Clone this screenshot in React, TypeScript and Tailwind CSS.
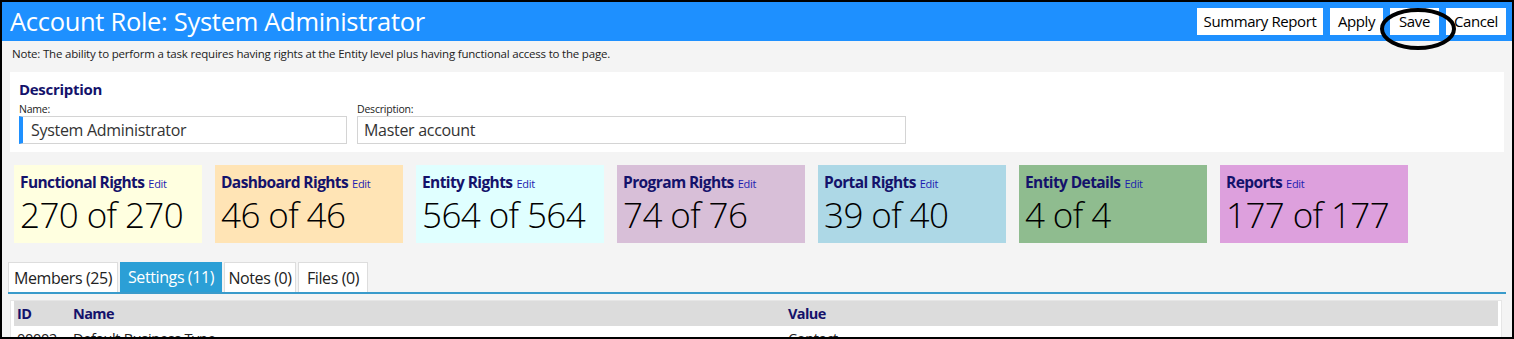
const font = { fontFamily: '"Open Sans", "Noto Sans", sans-serif' };

const cards = [
  { title: 'Functional Rights', value: '270 of 270', bg: 'bg-[#ffffe0]' },
  { title: 'Dashboard Rights', value: '46 of 46', bg: 'bg-[#ffe4b5]' },
  { title: 'Entity Rights', value: '564 of 564', bg: 'bg-[#e0ffff]' },
  { title: 'Program Rights', value: '74 of 76', bg: 'bg-[#d8bfd8]' },
  { title: 'Portal Rights', value: '39 of 40', bg: 'bg-[#add8e6]' },
  { title: 'Entity Details', value: '4 of 4', bg: 'bg-[#8fbc8f]' },
  { title: 'Reports', value: '177 of 177', bg: 'bg-[#dda0dd]' },
];

const tabs = [
  { label: 'Members (25)', active: false, w: 'w-[110px]' },
  { label: 'Settings (11)', active: true, w: 'w-[102px]' },
  { label: 'Notes (0)', active: false, w: 'w-[72px]' },
  { label: 'Files (0)', active: false, w: 'w-[70px]' },
];

function HeaderButton({ label, w }: { label: string; w: string }) {
  return (
    <button className={`h-[27px] ${w} bg-white text-black text-[15px] leading-none tracking-[-0.4px]`}>
      {label}
    </button>
  );
}

export default function App() {
  return (
    <div
      style={font}
      className="relative w-[1514px] h-[339px] overflow-hidden bg-[#f4f4f4] border-2 border-black flex flex-col"
    >
      {/* title bar */}
      <div className="h-[39px] shrink-0 bg-[#1e90ff] flex items-center justify-between pl-[8px] pr-[6px]">
        <h1 className="text-white text-[25.5px] leading-none tracking-[-0.3px]">Account Role: System Administrator</h1>
        <div className="flex items-center gap-[7px]">
          <HeaderButton label="Summary Report" w="w-[126px]" />
          <HeaderButton label="Apply" w="w-[53px]" />
          <HeaderButton label="Save" w="w-[49px]" />
          <HeaderButton label="Cancel" w="w-[60px]" />
        </div>
      </div>

      {/* annotation circled around Save */}
      <svg className="absolute left-[1377px] top-[5px]" width="78" height="44" viewBox="0 0 78 44">
        <ellipse cx="39" cy="22" rx="36" ry="19" fill="none" stroke="black" strokeWidth="4" />
      </svg>

      <p className="h-[31px] shrink-0 pl-[10px] pt-[4px] text-[11.5px] text-[#222] tracking-[-0.2px]">
        Note: The ability to perform a task requires having rights at the Entity level plus having functional access to the page.
      </p>

      {/* description panel */}
      <div className="mx-[8px] h-[80px] shrink-0 bg-white pl-[9px] pt-[8px]">
        <h2 className="text-[15px] font-bold text-[#14126b] leading-[18px] tracking-[-0.3px]">Description</h2>
        <div className="flex gap-[10px] mt-[4px]">
          <div className="flex flex-col">
            <label className="text-[10.5px] text-[#222] leading-[14px] tracking-[-0.2px]">Name:</label>
            <div className="w-[328px] h-[28px] border border-[#d4d4d4] border-l-[4px] border-l-[#1e90ff] flex items-center pl-[8px] text-[16px] text-[#333] tracking-[-0.3px]">
              System Administrator
            </div>
          </div>
          <div className="flex flex-col">
            <label className="text-[10.5px] text-[#222] leading-[14px] tracking-[-0.2px]">Description:</label>
            <div className="w-[549px] h-[28px] border border-[#d4d4d4] flex items-center pl-[6px] text-[16px] text-[#333] tracking-[-0.3px]">
              Master account
            </div>
          </div>
        </div>
      </div>

      {/* rights cards */}
      <div className="flex gap-[13px] pl-[12px] mt-[13px] shrink-0">
        {cards.map((c) => (
          <div key={c.title} className={`w-[188px] h-[78px] ${c.bg} pl-[6px] pt-[7px]`}>
            <div className="flex items-baseline gap-[4px] leading-[20px]">
              <span className="text-[15.5px] font-bold text-[#14126b] tracking-[-0.6px]">{c.title}</span>
              <span className="text-[11px] text-[#1c1cb0] tracking-[-0.3px]">Edit</span>
            </div>
            <div className="text-[35px] font-light text-black leading-[42px] tracking-[-0.6px]">{c.value}</div>
          </div>
        ))}
      </div>

      {/* tabs */}
      <div className="mx-[6px] mt-[19px] flex gap-[2px] border-b-[2px] border-[#3a9bcb] shrink-0">
        {tabs.map((t) => (
          <div
            key={t.label}
            className={
              t.active
                ? `h-[30px] ${t.w} flex items-center justify-center bg-[#2b9fd6] text-white text-[16px] tracking-[-0.4px]`
                : `h-[30px] ${t.w} flex items-center justify-center bg-white border border-b-0 border-[#dddddd] text-[#222] text-[16px] tracking-[-0.4px]`
            }
          >
            {t.label}
          </div>
        ))}
      </div>

      {/* settings table */}
      <div className="mx-[8px] mr-[10px] mt-[6px] bg-white border border-[#e6e6e6] px-[3px]">
        <div className="h-[25px] bg-[#dcdcdc] grid grid-cols-[56px_715px_1fr] items-center pl-[3px] text-[14.5px] font-bold text-[#14126b] tracking-[-0.6px]">
          <span>ID</span>
          <span>Name</span>
          <span>Value</span>
        </div>
        <div className="h-[25px] grid grid-cols-[56px_715px_1fr] items-center pl-[3px] text-[14.5px] text-[#222] tracking-[-0.3px]">
          <span>00002</span>
          <span>Default Business Type</span>
          <span>Contact</span>
        </div>
      </div>
    </div>
  );
}
